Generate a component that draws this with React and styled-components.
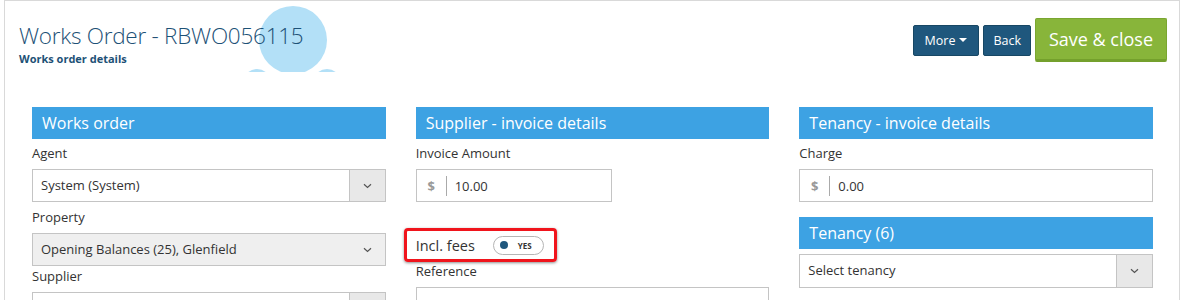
import React from "react";
import styled, { createGlobalStyle } from "styled-components";

const Global = createGlobalStyle`
  html, body { margin: 0; padding: 0; background: #fff; }
  body { font-family: "Open Sans", "Noto Sans", sans-serif; color: #333; }
  * { box-sizing: border-box; }
`;

const Page = styled.div`
  margin-left: 4px;
  width: 1176px;
  height: 300px;
  border: 1px solid #d9d9d9;
  border-bottom: none;
  overflow: hidden;
`;

const Header = styled.header`
  position: relative;
  display: flex;
  justify-content: space-between;
  align-items: flex-start;
  padding: 0 12px 0 14px;
  height: 106px;
`;

const TitleBlock = styled.div`
  position: relative;
  z-index: 1;
  padding-top: 20px;
`;

const Title = styled.h1`
  margin: 0;
  font-size: 22.5px;
  line-height: 30px;
  font-weight: 300;
  color: #1d5176;
  letter-spacing: -0.25px;
`;

const Subtitle = styled.div`
  margin-top: 1px;
  font-size: 11px;
  line-height: 14px;
  font-weight: 700;
  color: #1d5176;
`;

const Decoration = styled.svg`
  position: absolute;
  left: 236px;
  top: 4px;
  z-index: 0;
`;

const Actions = styled.div`
  display: flex;
  align-items: center;
  gap: 4px;
  margin-top: 17px;
`;

const DarkButton = styled.button`
  height: 31px;
  padding: 0 ${(p) => p.$px || 10}px;
  background: #1f577d;
  color: #fff;
  border: 1px solid #174764;
  border-radius: 2px;
  font-family: "Open Sans", sans-serif;
  font-size: 12.5px;
  display: inline-flex;
  align-items: center;
  gap: 4px;
`;

const Caret = styled.span`
  width: 0;
  height: 0;
  border-left: 4px solid transparent;
  border-right: 4px solid transparent;
  border-top: 4px solid #fff;
`;

const SaveButton = styled.button`
  height: 44px;
  width: 132px;
  background: #88b53a;
  color: #fff;
  border: 1px solid #7aa630;
  border-bottom: 3px solid #74a02c;
  border-radius: 2px;
  font-family: "Open Sans", sans-serif;
  font-size: 18px;
`;

const Columns = styled.main`
  display: grid;
  grid-template-columns: repeat(3, 1fr);
  column-gap: 30px;
  padding: 0 26px 0 27px;
`;

const Column = styled.section`
  display: flex;
  flex-direction: column;
`;

const SectionTitle = styled.h2`
  margin: ${(p) => p.$mt || 0}px 0 0;
  height: 32px;
  background: #3da2e3;
  color: #fff;
  font-size: 16px;
  font-weight: 400;
  line-height: 32px;
  padding-left: 10px;
`;

const Label = styled.label`
  display: block;
  font-size: 13px;
  line-height: 18px;
  color: #333;
  margin: ${(p) => p.$mt ?? 5}px 0 7px;
`;

const SelectBox = styled.div`
  display: flex;
  height: ${(p) => p.$h || 33}px;
  border: 1px solid #c4c4c4;
  background: ${(p) => (p.$disabled ? "#efefef" : "#fff")};
  margin-top: ${(p) => p.$mt || 0}px;
`;

const SelectValue = styled.div`
  flex: 1;
  padding-left: 8px;
  font-size: 13px;
  line-height: 31px;
  color: #333;
`;

const SelectButton = styled.div`
  width: 36px;
  display: flex;
  align-items: center;
  justify-content: center;
  background: ${(p) => (p.$plain ? "transparent" : "#e8e8e8")};
  border-left: 1px solid ${(p) => (p.$plain ? "transparent" : "#c4c4c4")};
`;

const MoneyInput = styled.div`
  display: flex;
  align-items: center;
  height: 33px;
  width: ${(p) => p.$w || "100%"};
  border: 1px solid #c4c4c4;
  background: #fff;
`;

const Currency = styled.span`
  width: 30px;
  text-align: center;
  font-size: 13px;
  font-weight: 700;
  color: #999;
  border-right: 1px solid #aaa;
  line-height: 20px;
`;

const MoneyValue = styled.span`
  padding-left: 8px;
  font-size: 13px;
  color: #333;
`;

const Highlight = styled.div`
  margin: 26px 0 0 -12px;
  width: 153px;
  height: 34px;
  border: 3px solid #f0141c;
  border-radius: 4px;
  box-shadow: 0 1px 3px rgba(0, 0, 0, 0.45);
  display: flex;
  align-items: center;
  padding-left: 9px;
  gap: 18px;
`;

const ToggleLabel = styled.span`
  font-size: 14.5px;
  color: #333;
`;

const Toggle = styled.div`
  width: 51px;
  height: 19px;
  border: 1px solid #b5b5b5;
  border-radius: 10px;
  display: flex;
  align-items: center;
  padding-left: 6px;
  gap: 10px;
`;

const Dot = styled.span`
  width: 8px;
  height: 8px;
  border-radius: 50%;
  background: #1f577d;
`;

const ToggleText = styled.span`
  font-size: 8px;
  font-weight: 700;
  color: #333;
`;

const TextInput = styled.div`
  height: 33px;
  border: 1px solid #c4c4c4;
  background: #fff;
`;

const Chevron = () => (
  <svg width="9" height="6" viewBox="0 0 9 6">
    <path d="M1 1.2 L4.5 4.5 L8 1.2" fill="none" stroke="#555" strokeWidth="1.2" />
  </svg>
);

export default function App() {
  return (
    <>
      <Global />
      <Page>
        <Header>
          <Decoration width="100" height="67" viewBox="0 0 100 67">
            <circle cx="52" cy="35" r="34" fill="#b3e0f7" />
            <circle cx="16" cy="78" r="14" fill="#b3e0f7" />
            <circle cx="86" cy="78" r="14" fill="#b3e0f7" />
          </Decoration>
          <TitleBlock>
            <Title>Works Order - RBWO056115</Title>
            <Subtitle>Works order details</Subtitle>
          </TitleBlock>
          <Actions>
            <DarkButton $px={11}>
              More <Caret />
            </DarkButton>
            <DarkButton $px={9}>Back</DarkButton>
            <SaveButton>Save &amp; close</SaveButton>
          </Actions>
        </Header>
        <Columns>
          <Column>
            <SectionTitle>Works order</SectionTitle>
            <Label>Agent</Label>
            <SelectBox>
              <SelectValue>System (System)</SelectValue>
              <SelectButton>
                <Chevron />
              </SelectButton>
            </SelectBox>
            <Label $mt={6}>Property</Label>
            <SelectBox $disabled>
              <SelectValue>Opening Balances (25), Glenfield</SelectValue>
              <SelectButton $plain>
                <Chevron />
              </SelectButton>
            </SelectBox>
            <Label $mt={1}>Supplier</Label>
            <SelectBox>
              <SelectValue />
              <SelectButton />
            </SelectBox>
          </Column>
          <Column>
            <SectionTitle>Supplier - invoice details</SectionTitle>
            <Label>Invoice Amount</Label>
            <MoneyInput $w="196px">
              <Currency>$</Currency>
              <MoneyValue>10.00</MoneyValue>
            </MoneyInput>
            <Highlight>
              <ToggleLabel>Incl. fees</ToggleLabel>
              <Toggle>
                <Dot />
                <ToggleText>YES</ToggleText>
              </Toggle>
            </Highlight>
            <Label $mt={0}>Reference</Label>
            <TextInput />
          </Column>
          <Column>
            <SectionTitle>Tenancy - invoice details</SectionTitle>
            <Label>Charge</Label>
            <MoneyInput>
              <Currency>$</Currency>
              <MoneyValue>0.00</MoneyValue>
            </MoneyInput>
            <SectionTitle $mt={15}>Tenancy (6)</SectionTitle>
            <SelectBox $mt={5} $h={34}>
              <SelectValue>Select tenancy</SelectValue>
              <SelectButton>
                <Chevron />
              </SelectButton>
            </SelectBox>
          </Column>
        </Columns>
      </Page>
    </>
  );
}
